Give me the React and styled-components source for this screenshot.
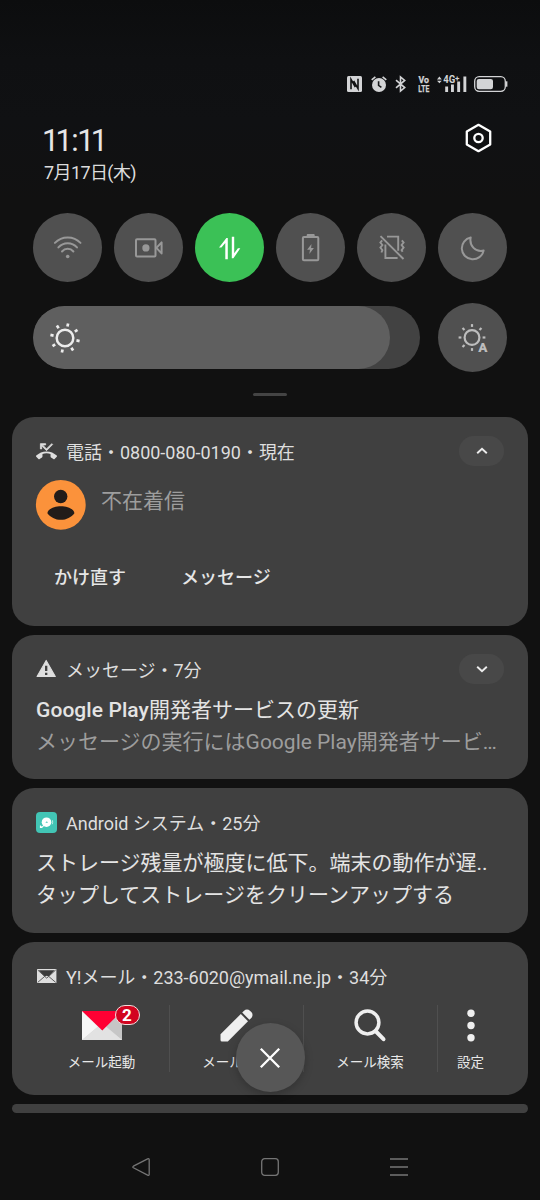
import React from 'react';
import styled, { createGlobalStyle } from 'styled-components';

const GlobalStyle = createGlobalStyle`
    * {
        box-sizing: border-box;
    }

    body {
        margin: 0;
        background: #111112;
        font-family: Roboto, 'Noto Sans CJK JP', sans-serif;
        color: #e4e4e4;
    }

    svg {
        display: block;
        flex: none;
        overflow: visible;
    }
`;

const Screen = styled.div`
    position: relative;
    display: flex;
    flex-direction: column;
    width: 540px;
    height: 1200px;
    overflow: hidden;
    background: linear-gradient(#0c0d0e 0, #0f1012 60px, #101113 120px, #111111 200px);
`;

const StatusBar = styled.div`
    display: flex;
    align-items: center;
    height: 16px;
    margin-top: 76px;
    padding-left: 347px;
    color: #d3d4d6;
`;

const StatusItem = styled.div`
    margin-right: ${props => props.$gap || 0}px;
`;

const Header = styled.div`
    display: flex;
    justify-content: space-between;
    height: 121px;
    padding: 31px 48px 0 44px;
`;

const Clock = styled.div`
    height: 35px;
    margin-left: -2px;
    font-size: 30.5px;
    line-height: 36px;
    letter-spacing: -3.7px;
    color: #e6e6e6;
`;

const Colon = styled.span`
    margin: 0 2.4px;
`;

const DateLabel = styled.div`
    font-size: 18px;
    line-height: 29px;
    letter-spacing: -0.6px;
    color: #dcdcdc;
`;

const Toggles = styled.div`
    display: flex;
    gap: 12px;
    padding: 0 33px;
`;

const Toggle = styled.div`
    display: flex;
    align-items: center;
    justify-content: center;
    width: 69px;
    height: 69px;
    border-radius: 50%;
    background: ${props => (props.$active ? '#3bc156' : '#505050')};
    color: ${props => props.$color || '#989898'};
`;

const BrightnessRow = styled.div`
    display: flex;
    align-items: center;
    justify-content: space-between;
    height: 69px;
    margin-top: 21px;
    padding: 0 33px;
`;

const Slider = styled.div`
    width: 387px;
    height: 63px;
    border-radius: 32px;
    background: #424242;
    overflow: hidden;
`;

const SliderFill = styled.div`
    display: flex;
    align-items: center;
    width: 357px;
    height: 63px;
    padding-left: 15.5px;
    border-radius: 32px;
    background: #5f5f5f;
    color: #ececec;
`;

const Handle = styled.div`
    width: 34px;
    height: 3px;
    margin: 21px auto 0;
    border-radius: 2px;
    background: #444444;
`;

const Notifications = styled.div`
    display: flex;
    flex-direction: column;
    gap: 9px;
    padding: 21px 12px 0;
`;

const Card = styled.div`
    height: ${props => props.$height}px;
    padding: 19px 24px 0;
    border-radius: 22px;
    background: #404040;
`;

const CollapsedCard = styled.div`
    height: 9px;
    border-radius: 5px;
    background: #404040;
`;

const CardHeader = styled.div`
    display: flex;
    align-items: center;
    height: 30px;
`;

const HeaderIcon = styled.div`
    display: flex;
    width: 21px;
    margin-right: 9px;
    justify-content: center;
    color: #dedede;
`;

const HeaderText = styled.div`
    flex: 1;
    padding-top: 4px;
    font-size: 18px;
    line-height: 28px;
    letter-spacing: -0.02px;
    white-space: nowrap;
    color: #dedede;
`;

const ExpandPill = styled.div`
    display: flex;
    align-items: center;
    justify-content: center;
    width: 45px;
    height: 30px;
    border-radius: 15px;
    background: #484848;
    color: #ececec;
`;

const CallBody = styled.div`
    display: flex;
    gap: 15px;
    margin-top: 13.5px;
`;

const CallText = styled.div`
    font-size: 21px;
    line-height: 43px;
    color: #9d9d9d;
`;

const CallActions = styled.div`
    display: flex;
    gap: 55px;
    margin-top: 33.5px;
    padding-left: 18px;
`;

const CallAction = styled.div`
    font-size: 18px;
    font-weight: 500;
    line-height: 30px;
    color: #e6e6e6;
`;

const Lines = styled.div`
    padding-top: ${props => props.$top}px;
`;

const Line = styled.div`
    font-size: 21px;
    line-height: 32px;
    white-space: nowrap;
    color: ${props => (props.$muted ? '#9d9d9d' : '#e4e4e4')};
`;

const Medium = styled.span`
    font-weight: 500;
    letter-spacing: 0.08px;
`;

const MailActions = styled.div`
    display: flex;
    height: 67px;
    margin: 14px 0 0 -1px;
`;

const MailAction = styled.div`
    display: flex;
    flex-direction: column;
    align-items: center;
    width: ${props => props.$width || 134}px;
    border-left: ${props => (props.$divided ? '1.5px solid #4f4f4f' : 'none')};
`;

const MailIcon = styled.div`
    position: relative;
    display: flex;
    align-items: center;
    justify-content: center;
    height: 42px;
    padding-right: 1px;
    color: #efefef;
`;

const MailLabel = styled.div`
    margin-top: 5px;
    padding-right: 1px;
    font-size: 13.5px;
    line-height: 20px;
    color: #e8e8e8;
`;

const Badge = styled.div`
    position: absolute;
    top: 0;
    left: 33px;
    width: 25px;
    height: 20px;
    border: 1.5px solid #f3dcdc;
    border-radius: 10px;
    background: #d2041f;
    color: #ffffff;
    font-size: 17px;
    font-weight: 700;
    line-height: 18.5px;
    text-align: center;
`;

const CloseButton = styled.div`
    position: absolute;
    top: 1023px;
    left: 235.5px;
    display: flex;
    align-items: center;
    justify-content: center;
    width: 69px;
    height: 69px;
    border-radius: 50%;
    background: #575757;
    color: #ffffff;
    box-shadow: 0 3px 9px rgba(0, 0, 0, 0.22);
`;

const NavBar = styled.div`
    display: flex;
    align-items: center;
    justify-content: space-between;
    height: 18px;
    margin-top: 45px;
    padding: 0 132px;
    color: #757575;
`;

const NfcIcon = () => (
    <svg width="15" height="16" viewBox="0 0 15 16">
        <rect width="15" height="16" rx="1.5" fill="currentColor" />
        <path
            d="M4 13.2V3.4L8.4 11M11 2.8v9.8L6.6 5"
            fill="none"
            stroke="#111213"
            strokeWidth="1.6"
        />
    </svg>
);

const AlarmIcon = () => (
    <svg width="16" height="16" viewBox="0 0 16 16">
        <circle cx="8" cy="9" r="7" fill="currentColor" />
        <path d="M.7 3.9 4.4.8M15.3 3.9 11.6.8" stroke="currentColor" strokeWidth="1.6" />
        <path d="M7.6 5.2v4.2l2.8 1.9" fill="none" stroke="#17181a" strokeWidth="1.6" />
    </svg>
);

const BluetoothIcon = () => (
    <svg width="11" height="16" viewBox="0 0 11 16">
        <path
            d="M1 4.2 9.7 11.6 5.5 15V1l4.2 3.4L1 11.8"
            fill="none"
            stroke="currentColor"
            strokeWidth="1.6"
        />
    </svg>
);

const VolteIcon = () => (
    <svg width="12" height="16" viewBox="0 0 12 16" fill="currentColor" stroke="currentColor" strokeWidth="0.25">
        <g fontFamily="Roboto, sans-serif" fontWeight="700" fontSize="9.5">
            <text x="0.5" y="7.2" textLength="10.5" lengthAdjust="spacingAndGlyphs">
                Vo
            </text>
            <text x="0.3" y="15.6" textLength="11" lengthAdjust="spacingAndGlyphs">
                LTE
            </text>
        </g>
    </svg>
);

const SignalIcon = () => (
    <svg width="30" height="16" viewBox="0 0 30 16" fill="currentColor">
        <path d="M0 3.4 2.4.6l2.4 2.8zM0 4.8h4.8L2.4 7.2z" />
        <path d="M8.2 10.6h2.9V16H8.2zM14 8.4h2.9V16H14zM20.2 5.4h2.9V16h-2.9zM26.4.6h2.9V16h-2.9z" />
        <g fontFamily="Roboto, sans-serif" fontWeight="700">
            <text x="6.3" y="7.4" fontSize="10" textLength="12" lengthAdjust="spacingAndGlyphs">
                4G
            </text>
            <text x="18" y="5.4" fontSize="8">
                +
            </text>
        </g>
    </svg>
);

const BatteryIcon = () => (
    <svg width="34" height="16" viewBox="0 0 34 16">
        <rect x="0.7" y="0.7" width="30.6" height="14.6" rx="4.5" fill="none" stroke="currentColor" strokeWidth="1.3" />
        <rect x="2.7" y="2.9" width="16.3" height="10.3" rx="2.2" fill="currentColor" />
        <path d="M32.6 5.3v5.4" stroke="currentColor" strokeWidth="1.6" />
    </svg>
);

const SettingsIcon = () => (
    <svg width="27" height="30" viewBox="0 0 27 30" fill="none" stroke="#fff" strokeWidth="2.3">
        <path d="M13.5 1.8 25.2 8.4v13.2L13.5 28.2 1.8 21.6V8.4z" strokeLinejoin="round" />
        <circle cx="13.5" cy="15" r="4.2" />
    </svg>
);

const WifiIcon = () => (
    <svg width="28" height="24" viewBox="0.3 0.3 28 24" fill="none" stroke="currentColor" strokeWidth="2" strokeLinecap="round">
        <path d="M1.2 7.2a17.7 17.7 0 0 1 25.6 0M4.7 11.7a12.3 12.3 0 0 1 18.6 0M8.3 15.8a7.5 7.5 0 0 1 11.4 0" />
        <circle cx="14" cy="20.8" r="1.8" fill="currentColor" stroke="none" />
    </svg>
);

const RecordIcon = () => (
    <svg width="28" height="20" viewBox="0 0 28 20" fill="none" stroke="currentColor" strokeWidth="2">
        <rect x="1" y="1.2" width="19.5" height="17.4" rx="1" />
        <path d="m21.4 9.9 5.2-5.5v11z" strokeLinejoin="round" />
        <circle cx="10.9" cy="9.9" r="3.6" fill="currentColor" stroke="none" />
    </svg>
);

const DataIcon = () => (
    <svg width="22" height="24" viewBox="0 0 22 24" fill="#fff">
        <path d="M8.8 23.3H6.3V7L2.4 11.6H0L7.4 2h1.4zM12.8.7h2.4v16.6l3.7-5h2.4l-6.9 10h-1.6z" />
    </svg>
);

const SaverIcon = () => (
    <svg width="18" height="28" viewBox="0.3 0.3 18 28">
        <rect x="1.2" y="3.4" width="15.4" height="23.2" rx="1" fill="none" stroke="currentColor" strokeWidth="2" />
        <path d="M5 1.4C5 .7 5.5.3 6.2.3h5.6c.7 0 1.2.4 1.2 1.1v1.5H5z" fill="currentColor" />
        <path d="M9.8 10.2 5.4 16h2.9l-.7 4.3 4.6-6H9.4z" fill="currentColor" />
    </svg>
);

const VibrateOffIcon = () => (
    <svg width="26" height="25" viewBox="0 0 26 25" fill="none" stroke="currentColor" strokeWidth="1.9">
        <path d="M1.5 1.2 24.5 24" />
        <path d="M8 1.6h11.2v14.2M18.6 23H6.4V9.5" />
        <path d="M3.2 5.3 1.4 7.5l2 2.500-2 2.600 2 2.500-1 2.400" />
        <path d="m22.8 5.300 1.800 2.200-2 2.500 2 2.600-2 2.500 1 1.700" />
    </svg>
);

const MoonIcon = () => (
    <svg width="24" height="24" viewBox="0 0 24 24">
        <path
            d="M9.7 1.5A11 11 0 1 0 22.6 14.6C14.6 16.4 8 9.8 9.7 1.5z"
            fill="none"
            stroke="currentColor"
            strokeWidth="2"
            strokeLinejoin="round"
        />
    </svg>
);

const RAYS = [0, 45, 90, 135, 180, 225, 270, 315];

const SunIcon = () => (
    <svg width="32" height="32" viewBox="-16 -16 32 32" fill="none" stroke="currentColor">
        <circle r="8.3" strokeWidth="2.5" />
        {RAYS.map(angle => (
            <path key={angle} d="M0-11.7v-3.2" strokeWidth="2.7" transform={`rotate(${angle + 12})`} />
        ))}
    </svg>
);

const AutoSunIcon = () => (
    <svg width="32" height="30" viewBox="-15 -14.5 32 30" fill="none" stroke="currentColor">
        <circle r="7.4" strokeWidth="2.2" />
        {RAYS.filter(angle => angle !== 135).map(angle => (
            <path key={angle} d="M0-10.6v-2.8" strokeWidth="2.2" transform={`rotate(${angle})`} />
        ))}
        <text
            x="6.2"
            y="14.3"
            fill="currentColor"
            stroke="#505050"
            strokeWidth="1.6"
            paintOrder="stroke"
            fontFamily="Roboto, sans-serif"
            fontWeight="900"
            fontSize="13.5"
        >
            A
        </text>
    </svg>
);

const ChevronIcon = ({ up }) => (
    <svg width="12" height="8" viewBox="0 0 12 8" fill="none" stroke="currentColor" strokeWidth="1.9">
        <path d={up ? 'M1.2 6.3 6 1.7l4.8 4.6' : 'M1.2 1.7 6 6.3l4.8-4.6'} />
    </svg>
);

const MissedCallIcon = () => (
    <svg width="21" height="21" viewBox="0 0 24 24" fill="currentColor">
        <path d="M6.5 5.5L12 11l7-7-1-1-6 6-4.5-4.5H11V3H5v6h1.5V5.5z" stroke="currentColor" strokeWidth="0.9" />
        <path d="M23.71 16.67C20.66 13.78 16.54 12 12 12 7.46 12 3.34 13.78.29 16.67c-.18.18-.29.43-.29.71s.11.53.29.71l2.48 2.48c.18.18.43.29.71.29.27 0 .52-.11.7-.28.79-.74 1.69-1.36 2.66-1.85.33-.16.56-.5.56-.9v-3.1C8.85 14.25 10.4 14 12 14s3.15.25 4.6.72v3.1c0 .39.23.74.56.9.98.49 1.87 1.12 2.67 1.85.18.18.43.28.7.28.28 0 .53-.11.71-.29l2.48-2.48c.18-.18.29-.43.29-.71s-.12-.52-.3-.7z" />
    </svg>
);

const AvatarIcon = () => (
    <svg width="50" height="50" viewBox="0 0 50 50">
        <circle cx="24.8" cy="24.8" r="24.9" fill="#fb923b" />
        <circle cx="24.7" cy="16.5" r="6.7" fill="#221c19" />
        <path d="M11.4 33.2c0-4 7-7 13.500-7s13.500 3 13.500 7c-3 4-8 6.600-13.500 6.600s-10.500-2.600-13.500-6.600z" fill="#221c19" />
    </svg>
);

const WarningIcon = () => (
    <svg width="21" height="19" viewBox="0.3 0 20 18">
        <path d="M10 1.3 18.7 16.7H1.3z" fill="currentColor" stroke="currentColor" strokeLinejoin="round" />
        <path d="M10 6.4v5M10 13v2.2" stroke="#404040" strokeWidth="2.2" />
    </svg>
);

const CleanerIcon = () => (
    <svg width="21" height="21" viewBox="0 0 21 21">
        <rect width="21" height="21" rx="4" fill="#42c5b5" />
        <circle cx="10.5" cy="10.2" r="4.8" fill="#fff" />
        <path d="m9.3 10.6 1.7-1.3.8 1.6z" fill="#42c5b5" />
        <path d="M8 13.2c-.6 1-2 1.8-3.2 1.9M4.5 13.5v1.8h2" fill="none" stroke="#fff" strokeWidth="1.2" />
        <path d="M16.5 8.3c.3 1.3.2 2.7-.2 3.9" fill="none" stroke="#c9f0ea" strokeWidth="0.9" />
    </svg>
);

const EnvelopeIcon = () => (
    <svg width="20" height="14" viewBox="0.3 0 20 14">
        <rect x="0.3" width="19.4" height="14" fill="currentColor" />
        <path d="M2 1.3h16L12 7.6 10 6.8 8 7.6z" fill="#3a3a3a" />
        <path d="m1 1 7 6.4L1 13.4M19 1l-7 6.4 7 6M8 7.4l2 1.7 2-1.7" fill="none" stroke="#505050" strokeWidth="0.9" />
    </svg>
);

const YMailIcon = () => (
    <svg width="40" height="29" viewBox="0 0 40 29">
        <path d="M0 0h40v29H0z" fill="#d9d9d9" />
        <path d="m0 0 16 15.5L0 29z" fill="#f6f6f6" />
        <path d="M40 0 24 15.5 40 29z" fill="#c6c6c6" />
        <path d="M0 29 17 15h6l17 14z" fill="#e2e2e2" />
        <path d="M0 0h40L20.3 19.5z" fill="#ff0033" />
    </svg>
);

const PencilIcon = () => (
    <svg width="33" height="33" viewBox="0 0 33 33" fill="currentColor">
        <path d="M.5 25.2 20.8 5l7.2 7.2L7.8 32.5H2A1.500 1.500 0 0 1 .5 31z" />
        <path d="m22.2 3.6 1.9-1.900a4 4 0 0 1 5.800 0l1.400 1.400a4 4 0 0 1 0 5.800l-1.900 1.900z" />
    </svg>
);

const SearchIcon = () => (
    <svg width="32" height="33" viewBox="0 0 32 33" fill="none" stroke="currentColor">
        <circle cx="13.5" cy="13.5" r="11.4" strokeWidth="3.5" />
        <path d="m21.5 22 8 8.2" strokeWidth="4" strokeLinecap="round" />
    </svg>
);

const MoreIcon = () => (
    <svg width="8" height="33" viewBox="0 0 8 33" fill="currentColor">
        <circle cx="4" cy="4.2" r="3.7" />
        <circle cx="4" cy="16.5" r="3.7" />
        <circle cx="4" cy="28.8" r="3.7" />
    </svg>
);

const CloseIcon = () => (
    <svg width="22" height="22" viewBox="0 0 22 22">
        <path d="m1.8 1.8 18.4 18.4M20.2 1.8 1.8 20.2" stroke="currentColor" strokeWidth="2.3" />
    </svg>
);

const BackIcon = () => (
    <svg width="18" height="18" viewBox="0 0 18 18" fill="none" stroke="currentColor" strokeWidth="1.3">
        <path d="M1.4 8.2 15.6.8q1.6-.6 1.6 1v14.4q0 1.6-1.6 1L1.4 9.8q-1.2-.8 0-1.6z" />
    </svg>
);

const HomeIcon = () => (
    <svg width="18" height="18" viewBox="0 0 18 18" fill="none" stroke="currentColor" strokeWidth="1.3">
        <rect x="0.7" y="0.7" width="16.6" height="16.6" rx="3" />
    </svg>
);

const RecentsIcon = () => (
    <svg width="18" height="18" viewBox="0 0 18 18" stroke="currentColor" strokeWidth="1.5">
        <path d="M0 1h18M0 9h18M0 17h18" />
    </svg>
);

const TOGGLES = [
    { name: 'wifi', Icon: WifiIcon },
    { name: 'record', Icon: RecordIcon },
    { name: 'data', Icon: DataIcon, active: true },
    { name: 'saver', Icon: SaverIcon },
    { name: 'vibrate', Icon: VibrateOffIcon },
    { name: 'moon', Icon: MoonIcon },
];

const STATUS_ITEMS = [
    { name: 'nfc', Icon: NfcIcon, gap: 8.5 },
    { name: 'alarm', Icon: AlarmIcon, gap: 8.5 },
    { name: 'bluetooth', Icon: BluetoothIcon, gap: 11.5 },
    { name: 'volte', Icon: VolteIcon, gap: 7 },
    { name: 'signal', Icon: SignalIcon, gap: 7.5 },
    { name: 'battery', Icon: BatteryIcon },
];

const CardTitle = ({ icon, text, children }) => (
    <CardHeader>
        <HeaderIcon>{icon}</HeaderIcon>
        <HeaderText>{text}</HeaderText>
        {children}
    </CardHeader>
);

const App = () => (
    <Screen lang="ja">
        <GlobalStyle />
        <StatusBar>
            {STATUS_ITEMS.map(({ name, Icon, gap }) => (
                <StatusItem key={name} $gap={gap}>
                    <Icon />
                </StatusItem>
            ))}
        </StatusBar>
        <Header>
            <div>
                <Clock>
                    11<Colon>:</Colon>11
                </Clock>
                <DateLabel>7月17日(木)</DateLabel>
            </div>
            <SettingsIcon />
        </Header>
        <Toggles>
            {TOGGLES.map(({ name, Icon, active }) => (
                <Toggle key={name} $active={active}>
                    <Icon />
                </Toggle>
            ))}
        </Toggles>
        <BrightnessRow>
            <Slider>
                <SliderFill>
                    <SunIcon />
                </SliderFill>
            </Slider>
            <Toggle $color="#bdbdbd">
                <AutoSunIcon />
            </Toggle>
        </BrightnessRow>
        <Handle />
        <Notifications>
            <Card $height={208.5}>
                <CardTitle icon={<MissedCallIcon />} text="電話・0800-080-0190・現在">
                    <ExpandPill>
                        <ChevronIcon up />
                    </ExpandPill>
                </CardTitle>
                <CallBody>
                    <AvatarIcon />
                    <CallText>不在着信</CallText>
                </CallBody>
                <CallActions>
                    <CallAction>かけ直す</CallAction>
                    <CallAction>メッセージ</CallAction>
                </CallActions>
            </Card>
            <Card $height={144.5}>
                <CardTitle icon={<WarningIcon />} text="メッセージ・7分">
                    <ExpandPill>
                        <ChevronIcon />
                    </ExpandPill>
                </CardTitle>
                <Lines $top={10.5}>
                    <Line>
                        <Medium>Google Play</Medium>開発者サービスの更新
                    </Line>
                    <Line $muted>メッセージの実行にはGoogle Play開発者サービ…</Line>
                </Lines>
            </Card>
            <Card $height={144.5}>
                <CardTitle icon={<CleanerIcon />} text="Android システム・25分" />
                <Lines $top={9.5}>
                    <Line>ストレージ残量が極度に低下。端末の動作が遅..</Line>
                    <Line>タップしてストレージをクリーンアップする</Line>
                </Lines>
            </Card>
            <Card $height={153.5}>
                <CardTitle icon={<EnvelopeIcon />} text="Y!メール・233-6020@ymail.ne.jp・34分" />
                <MailActions>
                    <MailAction>
                        <MailIcon>
                            <YMailIcon />
                            <Badge>2</Badge>
                        </MailIcon>
                        <MailLabel>メール起動</MailLabel>
                    </MailAction>
                    <MailAction $divided>
                        <MailIcon>
                            <PencilIcon />
                        </MailIcon>
                        <MailLabel>メール作成</MailLabel>
                    </MailAction>
                    <MailAction $divided>
                        <MailIcon>
                            <SearchIcon />
                        </MailIcon>
                        <MailLabel>メール検索</MailLabel>
                    </MailAction>
                    <MailAction $divided $width={67}>
                        <MailIcon>
                            <MoreIcon />
                        </MailIcon>
                        <MailLabel>設定</MailLabel>
                    </MailAction>
                </MailActions>
            </Card>
            <CollapsedCard />
        </Notifications>
        <CloseButton>
            <CloseIcon />
        </CloseButton>
        <NavBar>
            <BackIcon />
            <HomeIcon />
            <RecentsIcon />
        </NavBar>
    </Screen>
);

export default App;
